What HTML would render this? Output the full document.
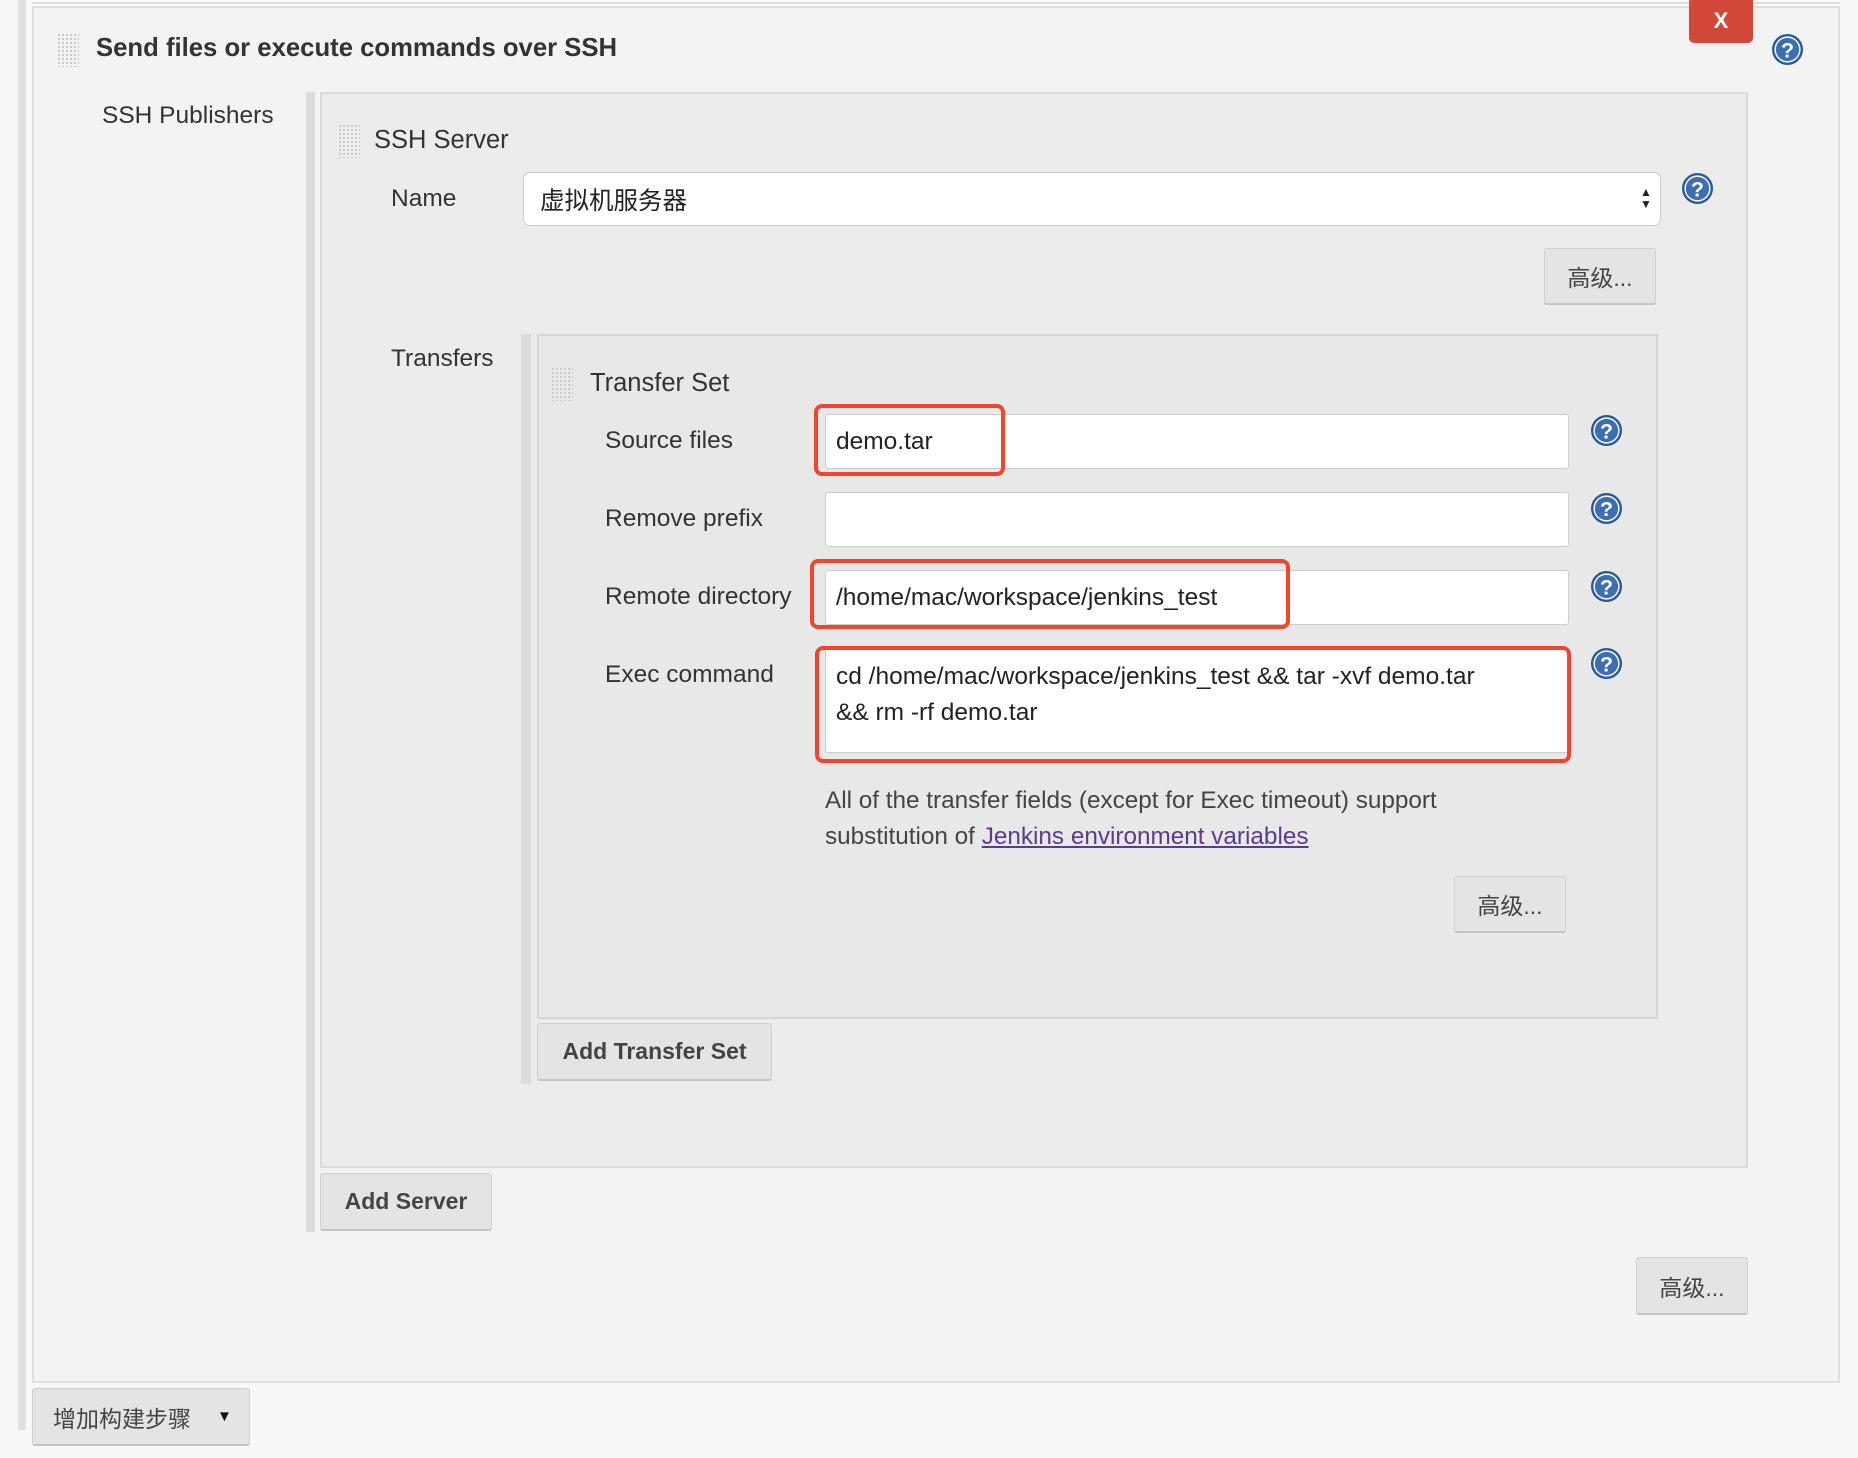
<!DOCTYPE html>
<html><head><meta charset="utf-8"><style>
*{margin:0;padding:0;box-sizing:border-box}
body{width:1858px;height:1458px;background:#f8f8f8;position:relative;overflow:hidden;font-family:"Liberation Sans","Noto Sans CJK SC",sans-serif;color:#333}
.a{position:absolute}
.t{position:absolute;font-size:24.5px;line-height:1;white-space:nowrap}
.grip{position:absolute;width:22px;height:34px;background-image:radial-gradient(#c8c8c8 1px,transparent 1.3px);background-size:4px 4px}
.btn{position:absolute;background:#e4e4e4;border:1px solid #cfcfcf;border-bottom:2px solid #c4c4c4;border-radius:3px;font-size:23px;color:#444;display:flex;align-items:center;justify-content:center}
.inp{position:absolute;background:#fff;border:1px solid #ccc;border-radius:3px;font-size:24.5px;color:#222;padding-left:10px;display:flex;align-items:center}
.red{position:absolute;border:4px solid #f0452e;border-radius:8px}
.help{position:absolute;width:33px;height:33px}
</style></head><body>
<div class="a" style="left:18px;top:0;width:8px;height:1430px;background:#e2e2e2"></div>
<div class="a" style="left:32px;top:0;width:1808px;height:4px;border-bottom:2px solid #ddd"></div>
<div class="a" style="left:32px;top:6px;width:1808px;height:1377px;background:#f3f3f3;border:2px solid #dedede"></div>
<div class="grip" style="left:57px;top:33px"></div>
<div class="t" style="left:96px;top:36px;font-weight:bold;font-size:25.7px;color:#333">Send files or execute commands over SSH</div>
<div class="a" style="left:1689px;top:0;width:64px;height:43px;background:#d24939;border-radius:0 0 5px 5px;color:#fff;font-weight:bold;font-size:22px;text-align:center;line-height:42px">X</div>
<svg class="help" style="left:1771px;top:33px" viewBox="0 0 34 34"><circle cx="17" cy="17" r="16" fill="#2a5a9a"/><circle cx="17" cy="17" r="13.5" fill="#fff"/><circle cx="17" cy="17" r="12" fill="#3d6fb0"/><text x="17" y="25" text-anchor="middle" font-family="Liberation Sans" font-weight="bold" font-size="22" fill="#fff">?</text></svg>

<div class="t" style="left:102px;top:104px">SSH Publishers</div>
<div class="a" style="left:306px;top:92px;width:9px;height:1140px;background:#dcdcdc"></div>
<div class="a" style="left:320px;top:92px;width:1428px;height:1076px;background:#ececec;border:2px solid #dadada"></div>
<div class="grip" style="left:338px;top:124px"></div>
<div class="t" style="left:374px;top:128px;font-size:25.5px">SSH Server</div>
<div class="t" style="left:391px;top:187px">Name</div>
<div class="inp" style="left:523px;top:172px;width:1138px;height:54px;border-radius:7px;padding-left:16px">虚拟机服务器</div>
<div class="a" style="left:1640px;top:186px;font-size:12px;line-height:12px;color:#222">▲<br>▼</div>
<svg class="help" style="left:1681px;top:172px" viewBox="0 0 34 34"><circle cx="17" cy="17" r="16" fill="#2a5a9a"/><circle cx="17" cy="17" r="13.5" fill="#fff"/><circle cx="17" cy="17" r="12" fill="#3d6fb0"/><text x="17" y="25" text-anchor="middle" font-family="Liberation Sans" font-weight="bold" font-size="22" fill="#fff">?</text></svg>
<div class="btn" style="left:1544px;top:248px;width:112px;height:57px">高级...</div>

<div class="t" style="left:391px;top:347px">Transfers</div>
<div class="a" style="left:521px;top:334px;width:10px;height:750px;background:#dcdcdc"></div>
<div class="a" style="left:537px;top:334px;width:1121px;height:685px;background:#e8e8e8;border:2px solid #d6d6d6"></div>
<div class="grip" style="left:551px;top:367px"></div>
<div class="t" style="left:590px;top:371px;font-size:25.5px">Transfer Set</div>
<div class="t" style="left:605px;top:429px">Source files</div>
<div class="t" style="left:605px;top:507px">Remove prefix</div>
<div class="t" style="left:605px;top:585px">Remote directory</div>
<div class="t" style="left:605px;top:663px">Exec command</div>
<div class="inp" style="left:825px;top:414px;width:744px;height:55px">demo.tar</div>
<div class="inp" style="left:825px;top:492px;width:744px;height:55px"></div>
<div class="inp" style="left:825px;top:570px;width:744px;height:55px">/home/mac/workspace/jenkins_test</div>
<div class="inp" style="left:825px;top:648px;width:744px;height:105px;padding-top:10px;line-height:36px;display:block">cd /home/mac/workspace/jenkins_test &amp;&amp; tar -xvf demo.tar<br>&amp;&amp; rm -rf demo.tar</div>
<div class="red" style="left:814px;top:404px;width:191px;height:72px"></div>
<div class="red" style="left:810px;top:559px;width:480px;height:70px"></div>
<div class="red" style="left:815px;top:646px;width:756px;height:117px"></div>
<svg class="help" style="left:1590px;top:414px" viewBox="0 0 34 34"><circle cx="17" cy="17" r="16" fill="#2a5a9a"/><circle cx="17" cy="17" r="13.5" fill="#fff"/><circle cx="17" cy="17" r="12" fill="#3d6fb0"/><text x="17" y="25" text-anchor="middle" font-family="Liberation Sans" font-weight="bold" font-size="22" fill="#fff">?</text></svg>
<svg class="help" style="left:1590px;top:492px" viewBox="0 0 34 34"><circle cx="17" cy="17" r="16" fill="#2a5a9a"/><circle cx="17" cy="17" r="13.5" fill="#fff"/><circle cx="17" cy="17" r="12" fill="#3d6fb0"/><text x="17" y="25" text-anchor="middle" font-family="Liberation Sans" font-weight="bold" font-size="22" fill="#fff">?</text></svg>
<svg class="help" style="left:1590px;top:570px" viewBox="0 0 34 34"><circle cx="17" cy="17" r="16" fill="#2a5a9a"/><circle cx="17" cy="17" r="13.5" fill="#fff"/><circle cx="17" cy="17" r="12" fill="#3d6fb0"/><text x="17" y="25" text-anchor="middle" font-family="Liberation Sans" font-weight="bold" font-size="22" fill="#fff">?</text></svg>
<svg class="help" style="left:1590px;top:647px" viewBox="0 0 34 34"><circle cx="17" cy="17" r="16" fill="#2a5a9a"/><circle cx="17" cy="17" r="13.5" fill="#fff"/><circle cx="17" cy="17" r="12" fill="#3d6fb0"/><text x="17" y="25" text-anchor="middle" font-family="Liberation Sans" font-weight="bold" font-size="22" fill="#fff">?</text></svg>
<div class="a" style="left:825px;top:783px;font-size:24.3px;line-height:36px;color:#444;width:800px;white-space:nowrap">All of the transfer fields (except for Exec timeout) support<br>substitution of <span style="color:#5c3b8c;text-decoration:underline">Jenkins environment variables</span></div>
<div class="btn" style="left:1454px;top:876px;width:112px;height:57px">高级...</div>
<div class="btn" style="left:537px;top:1023px;width:235px;height:58px;font-weight:bold;font-size:23px">Add Transfer Set</div>
<div class="btn" style="left:320px;top:1173px;width:172px;height:58px;font-weight:bold;font-size:23px">Add Server</div>
<div class="btn" style="left:1636px;top:1257px;width:112px;height:58px">高级...</div>
<div class="btn" style="left:32px;top:1388px;width:218px;height:58px;justify-content:flex-start;padding-left:20px">增加构建步骤<span style="font-size:15px;margin-left:26px;color:#111">▼</span></div>
</body></html>
